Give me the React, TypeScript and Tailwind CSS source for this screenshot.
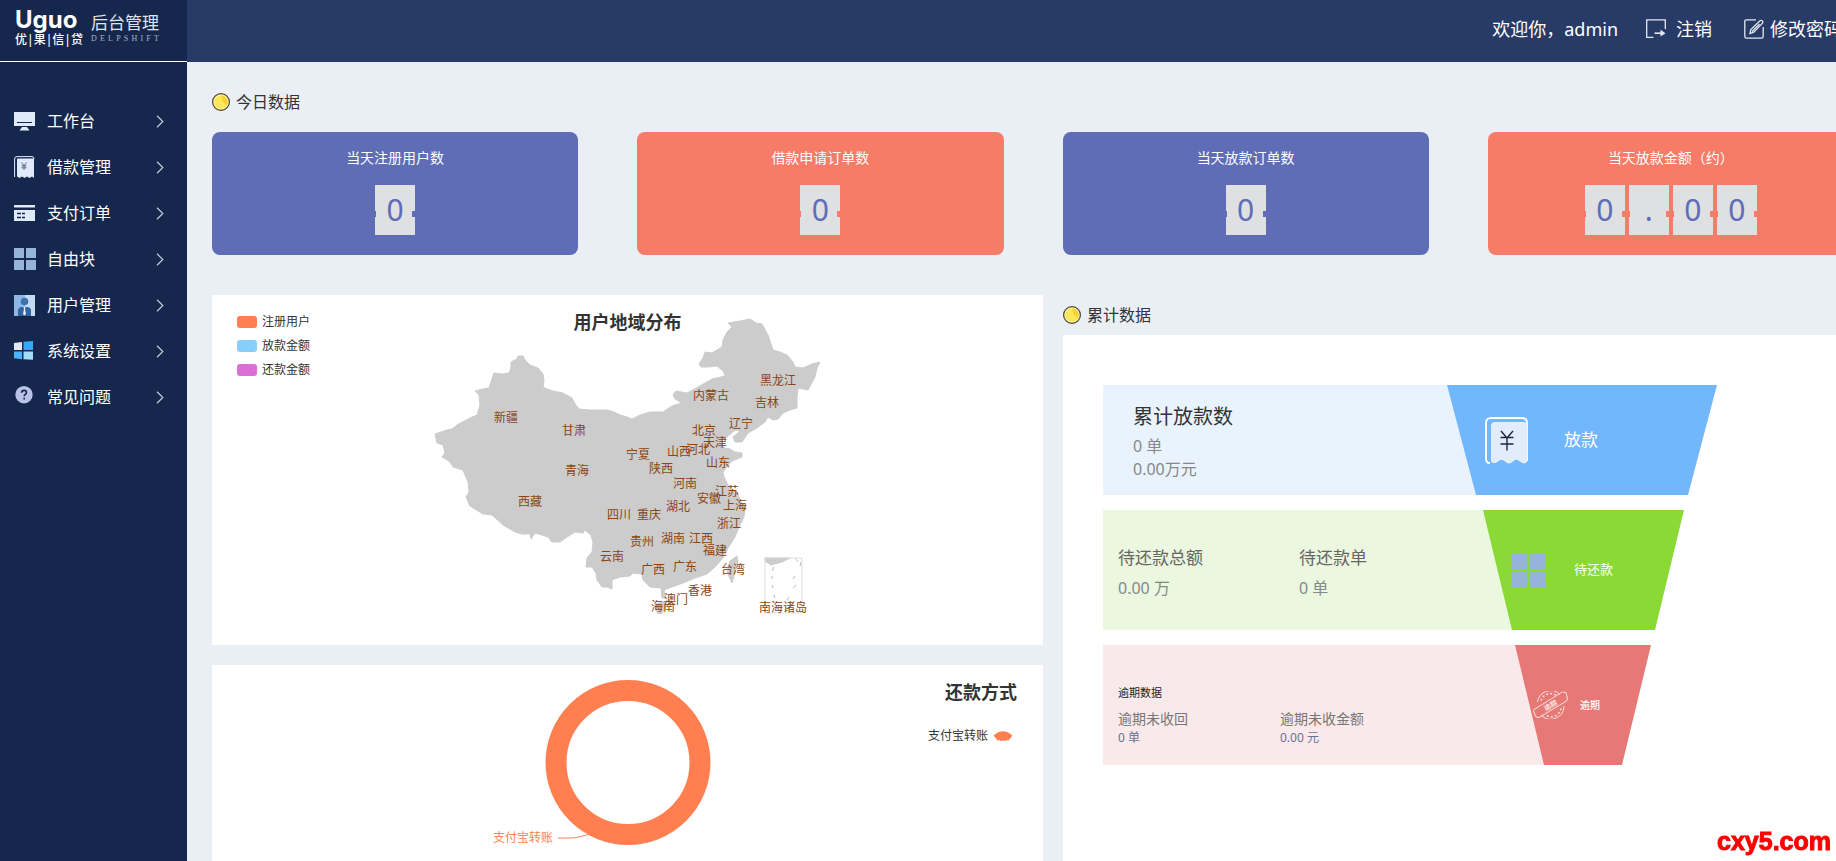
import React from "react";

const MonitorIcon = () => (
  <svg width="22" height="22" viewBox="0 0 22 22">
    <path d="M0 2h21v14H0z" fill="#dfeafb" />
    <path d="M3 12.500h15" stroke="#16274e" strokeWidth="1" />
    <path d="M8 17h5l2.500 3.500h-10z" fill="#dfeafb" />
  </svg>
);

const ReceiptIcon = () => (
  <svg width="22" height="22" viewBox="0 0 22 22">
    <path d="M.6 21V3Q.6.6 3 .6h15Q20 .6 20 3" fill="none" stroke="#dfeafb" strokeWidth="1" />
    <path d="M3 3.500Q3 2.500 4 2.500h16V22l-2-1.500-2.500 1.500-2.500-1.500L10.500 22 8 20.500 5.500 22 3 20.500z" fill="#dfeafb" />
    <path d="M7.500 6.500l2.500 3 2.500-3M10 9.500V14M7.500 9.800h5M7.500 11.800h5" fill="none" stroke="#5b6786" strokeWidth="1" />
  </svg>
);

const CardIcon = () => (
  <svg width="22" height="22" viewBox="0 0 22 22">
    <path d="M0 3h21v2.500H0zM0 8h21v11H0z" fill="#dfeafb" />
    <path d="M3 11.500h8M3 15.500h8" stroke="#16274e" strokeWidth="1.400" strokeDasharray="4 1" />
  </svg>
);

const BlocksIcon = ({ size = 22 }: { size?: number }) => (
  <svg width={size} height={size} viewBox="0 0 22 22">
    <path d="M0 0h10v10H0zM12 0h10v10H12zM0 12h10v10H0zM12 12h10v10H12z" fill="#96b3d9" />
  </svg>
);

const UserIcon = () => (
  <svg width="22" height="22" viewBox="0 0 22 22">
    <path d="M0 1h11v21H0z" fill="#8db8e6" />
    <path d="M11 1h10v21H11z" fill="#c5daf3" />
    <circle cx="10.500" cy="7.500" r="3.800" fill="#3d72ac" />
    <path d="M4 22v-5q0-4 4-4h5q4 0 4 4v5z" fill="#2f65a1" />
    <path d="M9.500 13h2l-.5 2 1 5-1.500 1.500L9 20l1-5z" fill="#e6effa" />
  </svg>
);

const WindowsIcon = () => (
  <svg width="22" height="22" viewBox="0 0 22 22">
    <path d="M0 3l8-1v8H0z" fill="#e4e8f2" />
    <path d="M9.500 1.700L19 1v9H9.500z" fill="#3ba5f5" />
    <path d="M0 11.500h8v7.800l-8-1z" fill="#49b4fb" />
    <path d="M9.500 11.500H19v8.200l-9.500-.500z" fill="#a6dcfb" />
  </svg>
);

const HelpIcon = () => (
  <svg width="22" height="22" viewBox="0 0 22 22">
    <circle cx="10" cy="8.700" r="8.700" fill="#b9c3ea" />
    <path d="M7.600 6.800q.2-2.400 2.500-2.400t2.400 2.100q0 1.300-1.300 2-1 .6-1 1.700M10.200 11.800v1.600" fill="none" stroke="#16274e" strokeWidth="1.600" />
  </svg>
);

const ChevronIcon = () => (
  <svg width="8" height="14" viewBox="0 0 8 14">
    <path d="M1 1.800l5.800 5.700L1 13.200" fill="none" stroke="#c3cbdc" strokeWidth="1.200" />
  </svg>
);

const LogoutIcon = () => (
  <svg width="20" height="20" viewBox="0 0 20 20" fill="none" stroke="#e3e8f2" strokeWidth="1.300">
    <path d="M19.300 10V.8H.7v17.600h6.800" />
    <path d="M8.500 14.200h7" strokeWidth="1.600" />
    <path d="M14.500 10.800l5 3.400-5 3.400z" fill="#e3e8f2" stroke="none" />
  </svg>
);

const EditIcon = () => (
  <svg width="20" height="20" viewBox="0 0 20 20" fill="none" stroke="#e3e8f2" strokeWidth="1.300">
    <path d="M12 .8H2.500Q.8.800.8 2.500v15q0 1.700 1.700 1.700h15q1.700 0 1.700-1.700V8" />
    <path d="M6 14.500l.8-4L16 1.800q1.300-.9 2.300.1t.2 2.300l-8.700 8.900z" />
    <path d="M8 12.500l7.500-7.500" />
  </svg>
);

const CoinIcon = () => (
  <svg width="18" height="18" viewBox="0 0 18 18">
    <circle cx="9" cy="9" r="8.400" fill="#fff3a0" stroke="#4b4533" strokeWidth="1.200" />
    <circle cx="9" cy="9" r="6.600" fill="#fbe75a" />
    <path d="M9 2.400a6.600 6.600 0 0 1 5.500 10.200L10.500 8z" fill="#fbcf35" />
  </svg>
);

const BigReceiptIcon = () => (
  <svg width="43" height="47" viewBox="0 0 43 47" className="shrink-0">
    <path d="M5 46Q1 46 1 42V6Q1 1 6 1h31q5 0 5 5v38" fill="none" stroke="#fff" strokeWidth="1.800" />
    <path d="M6 45V9q0-4 4-4h28q4 0 4 4v36q-3 3-7-.5-4-3.500-7 0-4 4-8 0-3.500-3.500-7 0-3 3-7 .5z" fill="#e2edfc" />
    <path d="M16 14l6 7 6-7M15.500 20.500h13M15.500 27h13M22 21v12.500" fill="none" stroke="#1c2740" strokeWidth="1.400" />
  </svg>
);

const StampIcon = () => (
  <svg width="35" height="28" viewBox="0 0 35 28" className="shrink-0" fill="none" stroke="#fbe0df">
    <path d="M4.500 11A13.300 13.300 0 0 1 27 3.500M31 15A13.300 13.300 0 0 1 8.500 24.500" />
    <path d="M8 9.500A10 10 0 0 1 24 5M28 17.500A10 10 0 0 1 12 23.500" strokeDasharray="2 2" strokeWidth="1.500" />
    <path d="M1 18.500L29.500 1l3.500.5 1.500 6.500-1 2L6 26.500l-3-.5-2.500-6z" />
    <text x="17.500" y="17" fontSize="7" fontWeight="700" textAnchor="middle" fill="#fbe0df" stroke="none" transform="rotate(-30 17.500 14.500)">
      逾期
    </text>
  </svg>
);

const menu = [
  { label: "工作台", icon: <MonitorIcon /> },
  { label: "借款管理", icon: <ReceiptIcon /> },
  { label: "支付订单", icon: <CardIcon /> },
  { label: "自由块", icon: <BlocksIcon /> },
  { label: "用户管理", icon: <UserIcon /> },
  { label: "系统设置", icon: <WindowsIcon /> },
  { label: "常见问题", icon: <HelpIcon /> },
];

const stats = [
  { title: "当天注册用户数", value: "0", color: "bg-[#5e6db5]" },
  { title: "借款申请订单数", value: "0", color: "bg-[#f67c67]" },
  { title: "当天放款订单数", value: "0", color: "bg-[#5e6db5]" },
  { title: "当天放款金额（约）", value: "0.00", color: "bg-[#f67c67]" },
];

const legend = [
  { label: "注册用户", color: "bg-[#ff7f50]" },
  { label: "放款金额", color: "bg-[#87cefa]" },
  { label: "还款金额", color: "bg-[#da70d6]" },
];

// [name, x, y] on the map canvas
const provinces: [string, number, number][] = [
  ["新疆", 86, 117], ["甘肃", 154, 130], ["宁夏", 218, 154], ["青海", 157, 170],
  ["西藏", 110, 201], ["四川", 199, 214], ["重庆", 229, 214], ["贵州", 222, 241],
  ["云南", 192, 256], ["广西", 233, 269], ["黑龙江", 358, 80], ["内蒙古", 291, 95],
  ["吉林", 347, 102], ["辽宁", 321, 123], ["北京", 284, 130], ["天津", 295, 142],
  ["河北", 278, 149], ["山西", 259, 151], ["山东", 298, 162], ["陕西", 241, 168],
  ["河南", 265, 183], ["江苏", 307, 191], ["安徽", 289, 198], ["上海", 315, 205],
  ["湖北", 258, 206], ["浙江", 309, 223], ["湖南", 253, 238], ["江西", 281, 238],
  ["福建", 295, 250], ["广东", 265, 266], ["台湾", 313, 269], ["香港", 280, 290],
  ["澳门", 256, 299], ["海南", 243, 306], ["南海诸岛", 363, 307],
];

const mainland =
  "M15 134L27 130 32 129 37 125 50 118 57 115 60 105 59 95 55 91 63 89 69 88 71 82 74 73 82 74 89 73 91 68 91 62 97 59 98 56 103 56 105 60 110 65 118 68 123 74 124 81 123 87 127 89 133 91 143 93 152 98 155 104 159 109 170 110 187 110 194 112 200 115 207 117 212 119 220 115 230 112 243 112 252 106 262 103 255 99 253 95 256 91 267 93 278 87 292 79 305 76 303 71 297 66 287 67 281 67 279 64 283 58 285 52 292 53 302 47 303 40 307 32 312 27 308 23 320 21 330 19 336 23 342 24 348 35 353 50 360 52 367 55 373 62 375 67 383 68 392 64 400 62 397 68 395 77 388 90 378 88 377 97 377 108 370 110 363 113 358 119 353 120 348 117 345 122 337 128 328 133 322 142 315 142 313 137 320 131 315 130 307 137 302 140 300 143 305 148 310 149 315 152 322 153 322 157 312 161 307 167 303 172 304 177 308 185 317 193 320 200 325 207 324 217 319 227 315 237 308 248 303 258 295 267 287 274 275 278 263 283 252 287 246 289 244 291 246 298 242 298 241 288 230 287 223 280 222 274 213 273 210 276 200 277 192 280 192 289 187 287 182 287 177 280 176 273 172 267 166 267 167 258 172 252 173 243 171 235 167 232 165 230 163 233 155 232 147 237 140 242 132 242 128 237 122 235 115 233 111 239 110 234 102 234 95 232 83 225 72 215 63 214 50 206 46 197 49 192 48 182 45 175 43 170 33 167 29 161 22 157 25 153 23 145 17 143z";

const ChinaMap = () => (
  <svg width="415" height="345" viewBox="0 0 415 345">
    <g fill="#ccc" stroke="#ccc" strokeWidth="1" strokeLinejoin="round">
      <path d={mainland} />
      <path d="M235 305L241 302 246 303 245 309 241 314 237 313z" />
      <path d="M317 256L318 262 314 276 312 283 307 272 310 261z" />
      <path d="M345 258h25l-8 4-11 3-6-4z" />
    </g>
    <path d="M345 258h37v55h-37z" fill="none" stroke="#ddd" />
    <path d="M354 267l-2 4M352 276v3M352 285l1 3M354 295l1 3M376 259l2 3M381 262l-1 4M375 276l-2 3M376 285l-3 3M369 297l-2 3" stroke="#bbb" />
    <g fill="#8b4513" fontSize="12" textAnchor="middle">
      {provinces.map(([name, x, y]) => (
        <text key={name} x={x} y={y + 5}>{name}</text>
      ))}
    </g>
  </svg>
);

const SectionTitle = ({ children }: { children: React.ReactNode }) => (
  <h2 className="flex items-center gap-1.5 text-base leading-[30px] text-[#333]">
    <CoinIcon />
    {children}
  </h2>
);

const StatCard = ({ title, value, color }: { title: string; value: string; color: string }) => (
  <div className={`${color} rounded-lg pt-4 pb-5 text-center`}>
    <h3 className="text-sm leading-5 text-white">{title}</h3>
    <div className="mt-[17px] flex justify-center gap-1">
      {value.split("").map((char, i) => (
        <span key={i} className="relative h-[50px] w-10 bg-[#dfe0e2] text-[30px] leading-[50px] text-[#5e6db5]">
          {char}
          <i className={`${color} absolute top-[26px] left-0 h-1.5 w-px`} />
          <i className={`${color} absolute top-[26px] right-0 h-1.5 w-[3px]`} />
        </span>
      ))}
    </div>
  </div>
);

const App: React.FC = () => {
  return (
    <div className="h-screen overflow-hidden font-['Noto_Sans','Noto_Sans_CJK_SC',sans-serif]">
      <div className="flex min-h-full min-w-[1920px] bg-[#eaeef5]">

        {/* SIDEBAR */}
        <aside className="w-[187px] shrink-0 bg-[#16274e] text-white">
          <div className="flex h-[62px] gap-2 border-b border-white pt-2 pl-[15px]">
            <div className="w-[68px]">
              <div className="font-['Inter',sans-serif] text-2xl leading-6 font-bold">Uguo</div>
              <div className="mt-px flex justify-between text-[12px] leading-[14px] font-medium">
                <span>优</span><span>|</span><span>果</span><span>|</span><span>信</span><span>|</span><span>贷</span>
              </div>
            </div>
            <div className="w-[68px] pt-1 text-[#dfe4ef]">
              <div className="text-[17px] leading-[22px]">后台管理</div>
              <div className="flex justify-between font-['Liberation_Serif',serif] text-[8px] leading-[10px] text-[#a9b3c9]">
                {"DELPSHIFT".split("").map((char, i) => <span key={i}>{char}</span>)}
              </div>
            </div>
          </div>
          <nav className="pt-9">
            {menu.map((item) => (
              <a key={item.label} href="#" className="flex h-[46px] items-center pr-[23px] pl-3.5 text-base">
                {item.icon}
                <span className="ml-[11px] flex-1">{item.label}</span>
                <ChevronIcon />
              </a>
            ))}
          </nav>
        </aside>

        <div className="min-w-0 flex-1">
          {/* HEADER */}
          <header className="flex h-[62px] items-center justify-end gap-7 bg-[#283b66] pr-[78px] pb-1 text-lg text-white">
            <span>欢迎你，admin</span>
            <div className="flex gap-8">
              <a href="#" className="flex items-center gap-2.5"><LogoutIcon />注销</a>
              <a href="#" className="flex items-center gap-1.5"><EditIcon />修改密码</a>
            </div>
          </header>

          <main className="pt-[25px] pr-[26px] pl-[25px]">
            <SectionTitle>今日数据</SectionTitle>
            <div className="mt-[15px] grid grid-cols-4 gap-[59px] pr-10">
              {stats.map((s) => <StatCard key={s.title} {...s} />)}
            </div>

            <div className="mt-10 grid grid-cols-2 gap-5">
              <div className="space-y-5">
                {/* REGION MAP */}
                <section className="relative flex h-[350px] justify-center bg-white pt-[5px]">
                  <ChinaMap />
                  <h3 className="absolute inset-x-0 top-[15px] text-center text-lg leading-6 font-bold text-[#333]">用户地域分布</h3>
                  <ul className="absolute top-[15px] left-[25px] text-xs leading-6 text-[#333]">
                    {legend.map((l) => (
                      <li key={l.label} className="flex items-center gap-[5px]">
                        <span className={`${l.color} h-3 w-5 rounded-[3px]`} />
                        {l.label}
                      </li>
                    ))}
                  </ul>
                </section>

                {/* REPAYMENT RING */}
                <section className="grid h-[350px] grid-cols-[1fr_auto_1fr] bg-white">
                  <svg width="300" height="200" viewBox="0 0 300 200" className="col-start-2">
                    <circle cx="150" cy="97.500" r="72" fill="none" stroke="#ff7f50" strokeWidth="21" />
                    <path d="M80 173h13q6 0 19-4" fill="none" stroke="#ff7f50" />
                    <text x="15" y="177" fontSize="12" fill="#ff7f50">支付宝转账</text>
                  </svg>
                  <div className="flex flex-col items-end pt-[15px] pr-[26px] text-[#333]">
                    <h3 className="text-lg leading-6 font-bold">还款方式</h3>
                    <div className="mt-5 mr-1 flex items-center gap-[5px] text-xs leading-6">
                      支付宝转账
                      <svg width="20" height="10" viewBox="0 0 20 10">
                        <path d="M.5 4.500Q10-4 19.500 4.500L15 10q-1-2-2.500 0-2.500-1-5 0-1.500-2-2.500 0z" fill="#ff7f50" />
                      </svg>
                    </div>
                  </div>
                </section>
              </div>

              {/* TOTALS */}
              <div className="flex flex-col pt-[5px]">
                <SectionTitle>累计数据</SectionTitle>
                <section className="mt-[5px] flex-1 space-y-[15px] bg-white pt-[50px] pl-10">
                  <div className="flex h-[110px]">
                    <div className="w-[373px] bg-[#e8f3fd] pt-[18px] pl-[30px] text-base leading-[23px] text-[#888]">
                      <h3 className="text-xl leading-7 text-[#333]">累计放款数</h3>
                      <p className="mt-1">0 单</p>
                      <p>0.00万元</p>
                    </div>
                    <div className="-ml-[29px] flex w-[270px] items-center bg-[#72b6fc] pl-[38px] text-[17px] text-white [clip-path:polygon(0_0,100%_0,calc(100%-29px)_100%,29px_100%)]">
                      <BigReceiptIcon />
                      <span className="ml-9">放款</span>
                    </div>
                  </div>

                  <div className="flex h-[120px]">
                    <div className="flex w-[409px] bg-[#ebf7df] pt-8 pl-[15px] text-base leading-[31px] text-[#888]">
                      <dl className="w-[181px]">
                        <dt className="text-[17px] text-[#666]">待还款总额</dt>
                        <dd>0.00 万</dd>
                      </dl>
                      <dl>
                        <dt className="text-[17px] text-[#666]">待还款单</dt>
                        <dd>0 单</dd>
                      </dl>
                    </div>
                    <div className="-ml-[29px] flex w-[201px] items-center bg-[#8ad935] pl-7 text-[13px] text-white [clip-path:polygon(0_0,100%_0,calc(100%-29px)_100%,29px_100%)]">
                      <BlocksIcon size={35} />
                      <span className="ml-7">待还款</span>
                    </div>
                  </div>

                  <div className="flex h-[120px]">
                    <div className="w-[441px] bg-[#f9e9ea] pt-10 pl-[15px]">
                      <h3 className="text-[11px] leading-4 text-[#222]">逾期数据</h3>
                      <div className="mt-2 flex text-xs leading-[18px] text-[#6a7096]">
                        <dl className="w-[162px]">
                          <dt className="text-sm leading-5 text-[#777]">逾期未收回</dt>
                          <dd>0 单</dd>
                        </dl>
                        <dl>
                          <dt className="text-sm leading-5 text-[#777]">逾期未收金额</dt>
                          <dd>0.00 元</dd>
                        </dl>
                      </div>
                    </div>
                    <div className="-ml-[29px] flex w-[136px] items-center bg-[#e67875] pl-[18px] text-[10px] text-white [clip-path:polygon(0_0,100%_0,calc(100%-29px)_100%,29px_100%)]">
                      <StampIcon />
                      <span className="ml-3 font-medium">逾期</span>
                    </div>
                  </div>
                </section>
              </div>
            </div>
          </main>
        </div>
      </div>

      <div className="fixed right-[5px] bottom-0 font-['Liberation_Sans',sans-serif] text-[25px] leading-10 font-bold text-[#f00] [-webkit-text-stroke:1px_#f00]">
        cxy5.com
      </div>
    </div>
  );
};

export default App;
